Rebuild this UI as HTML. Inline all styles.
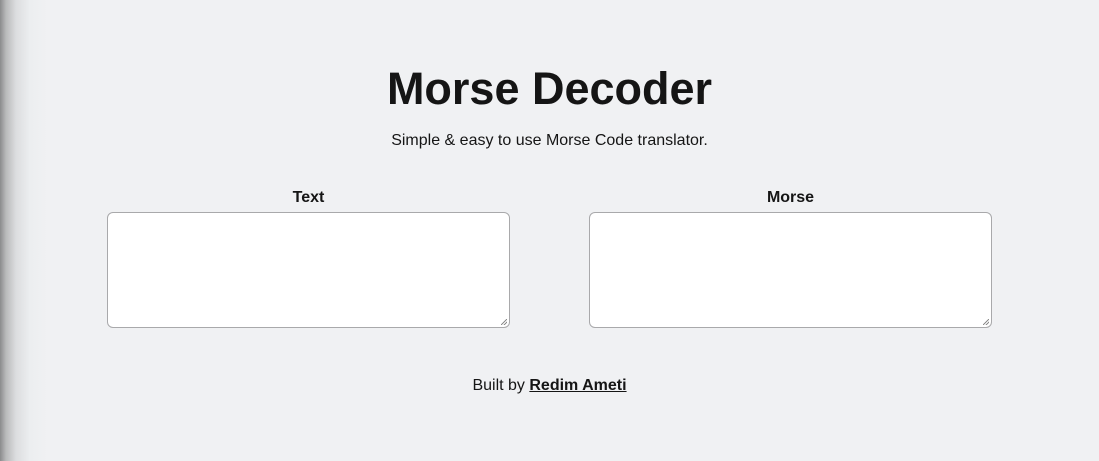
<!DOCTYPE html>
<html><head><style>
html,body{margin:0;padding:0}
body{width:1099px;height:461px;background:#f0f1f3;font-family:"Liberation Sans",sans-serif;color:#151515;position:relative;overflow:hidden}
.sh{position:absolute;left:0;top:0;width:50px;height:461px;background:linear-gradient(to right,#8a8b8c 0px,#b9babb 6px,#dcdddf 16px,#eceef0 30px,#f0f1f3 48px)}
h1{position:absolute;left:0;width:1099px;top:61px;margin:0;text-align:center;font-size:45px;font-weight:bold;line-height:56px;letter-spacing:0px}
.sub{position:absolute;left:0;width:1099px;top:132px;text-align:center;font-size:16px}
.lab{position:absolute;top:189px;width:403px;text-align:center;font-weight:bold;font-size:16px}
.ta{position:absolute;top:212px;width:401px;height:114px;background:#fff;border:1px solid #a9a9ab;border-radius:6px}
.ta:after{content:"";position:absolute;right:2px;bottom:2px;width:6px;height:6px;background:linear-gradient(135deg,transparent 45%,#888 46%,#888 55%,transparent 56%,transparent 70%,#888 71%,#888 80%,transparent 81%)}
.foot{position:absolute;left:0;width:1099px;top:377px;text-align:center;font-size:16px}
.foot b{text-decoration:underline}
</style></head><body>
<div class="sh"></div>
<h1>Morse Decoder</h1>
<div class="sub">Simple &amp; easy to use Morse Code translator.</div>
<div class="lab" style="left:107px">Text</div>
<div class="lab" style="left:589px">Morse</div>
<div class="ta" style="left:107px"></div>
<div class="ta" style="left:589px"></div>
<div class="foot">Built by <b>Redim Ameti</b></div>
</body></html>
